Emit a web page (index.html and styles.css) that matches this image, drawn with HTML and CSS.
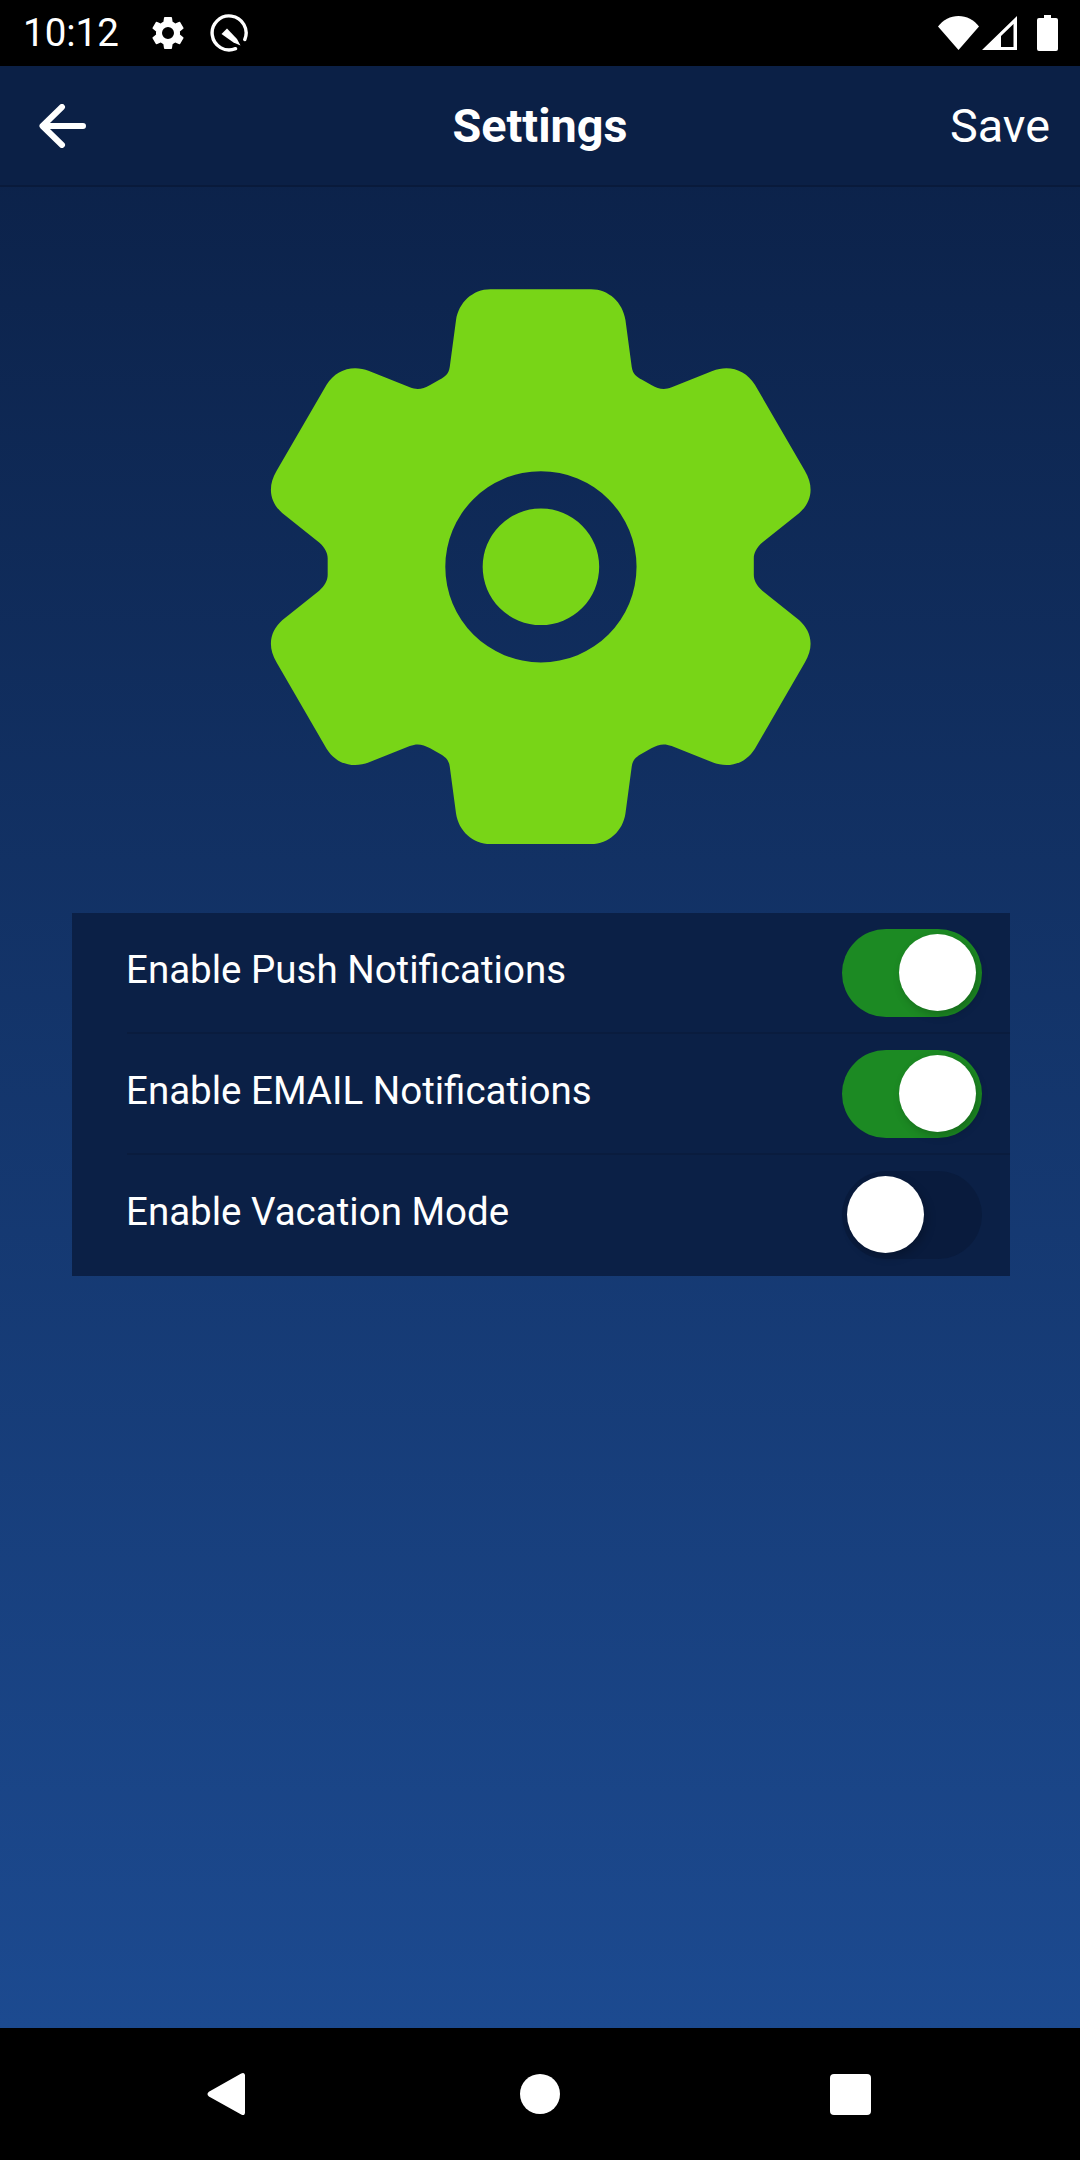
FILE: index.html
```html
<!DOCTYPE html>
<html lang="en">
<head>
<meta charset="utf-8">
<title>Settings</title>
<link rel="stylesheet" href="styles.css">
</head>
<body>
<div class="phone">
  <header class="status">
    <span class="clock">10:12</span>
    <svg class="st-gear" viewBox="0 0 24 24"><path fill="#fff" d="M19.14 12.94c.04-.3.06-.61.06-.94s-.02-.64-.07-.94l2.03-1.58a.5.5 0 0 0 .12-.64l-1.92-3.32a.5.5 0 0 0-.59-.22l-2.39.96a7 7 0 0 0-1.62-.94l-.36-2.54a.48.48 0 0 0-.48-.41h-3.84a.48.48 0 0 0-.47.41l-.36 2.54c-.59.24-1.13.57-1.62.94l-2.39-.96a.49.49 0 0 0-.59.22L2.74 8.87a.48.48 0 0 0 .12.61l2.03 1.58c-.05.3-.09.63-.09.94s.02.64.07.94l-2.03 1.58a.5.5 0 0 0-.12.64l1.92 3.32c.12.22.37.29.59.22l2.39-.96c.5.38 1.03.7 1.62.94l.36 2.54c.05.24.24.41.48.41h3.84c.24 0 .44-.17.47-.41l.36-2.54c.59-.24 1.13-.56 1.62-.94l2.39.96c.22.08.47 0 .59-.22l1.92-3.32a.48.48 0 0 0-.12-.61zM12 15.6A3.6 3.6 0 1 1 12 8.4a3.6 3.6 0 0 1 0 7.2z"/></svg>
    <svg class="st-q" viewBox="0 0 38 38"><path fill="none" stroke="#fff" stroke-width="3.4" stroke-linecap="round" d="M25.500 34.700A17 17 0 1 1 34.800 25.500"/><path fill="#fff" d="M17 14.500 27 25 30.500 31.500 23.500 28.500 11.500 20z"/></svg>
    <span class="status-gap"></span>
    <svg class="st-wifi" viewBox="0 0 41 34"><path fill="#fff" d="M0 10.500C5 4 12.500 0 20.500 0S36 4 41 10.500L20.500 34z"/></svg>
    <svg class="st-signal" viewBox="0 0 35 34"><path fill="#fff" fill-rule="evenodd" d="M0 34 35 0V34zM19 20V31H31.500V8z"/></svg>
    <svg class="st-batt" viewBox="0 0 21 36"><path fill="#fff" d="M7 0h7v3h5a2 2 0 0 1 2 2v29a2 2 0 0 1-2 2H2a2 2 0 0 1-2-2V5a2 2 0 0 1 2-2h5z"/></svg>
  </header>

  <main class="screen">
    <nav class="appbar">
      <svg class="back" viewBox="0 0 48 44"><path fill="none" stroke="#fff" stroke-width="6" stroke-linecap="round" stroke-linejoin="round" d="M44 22H4M23 3 3.500 22 23 41"/></svg>
      <h1 class="title">Settings</h1>
      <span class="save">Save</span>
    </nav>

    <div class="hero">
      <svg class="hero-gear" viewBox="0 0 1568 1568"><path fill="#78d517" fill-rule="evenodd" d="M786 52H922C970 52 1008 88 1015 135L1032 262C1035 282 1045 288 1060 297L1085 311C1105 322 1120 325 1140 317L1250 273C1295 255 1340 270 1365 310L1500 543C1528 590 1515 630 1485 657L1385 737C1370 750 1362 765 1362 780V824C1362 839 1370 854 1385 867L1485 947C1515 974 1528 1014 1500 1061L1365 1294C1340 1334 1295 1349 1250 1331L1140 1287C1120 1279 1105 1282 1085 1293L1060 1307C1045 1316 1035 1322 1032 1342L1015 1469C1008 1516 970 1552 922 1552H650C602 1552 564 1516 557 1469L540 1342C537 1322 527 1316 512 1307L487 1293C467 1282 452 1279 432 1287L322 1331C277 1349 232 1334 207 1294L72 1061C44 1014 57 974 87 947L187 867C202 854 210 839 210 824V780C210 765 202 750 187 737L87 657C57 630 44 590 72 543L207 310C232 270 277 255 322 273L432 317C452 325 467 322 487 311L512 297C527 288 537 282 540 262L557 135C564 88 602 52 650 52ZM786.500 544A258.500 258.500 0 1 0 786.500 1061A258.500 258.500 0 1 0 786.500 544ZM786.500 645A157.500 157.500 0 1 1 786.500 960A157.500 157.500 0 1 1 786.500 645Z"/></svg>
    </div>

    <section class="panel">
      <div class="row">
        <span class="label">Enable Push Notifications</span>
        <span class="switch on"><span class="thumb"></span></span>
      </div>
      <div class="row">
        <span class="label">Enable EMAIL Notifications</span>
        <span class="switch on"><span class="thumb"></span></span>
      </div>
      <div class="row">
        <span class="label">Enable Vacation Mode</span>
        <span class="switch"><span class="thumb"></span></span>
      </div>
    </section>
  </main>

  <footer class="navbar">
    <svg class="nav-back" viewBox="0 0 40 46"><path fill="#fff" d="M36 1.500C38 0 40 1 40 3.500V42.500C40 45 38 46 36 44.500L2 25.500C0 24 0 22 2 20.500z"/></svg>
    <span class="nav-home"></span>
    <span class="nav-recent"></span>
  </footer>
</div>
</body>
</html>
```
FILE: styles.css
```css
* { box-sizing: border-box; }
html, body { margin: 0; padding: 0; }
body { font-family: Roboto, "Liberation Sans", sans-serif; color: #fff; background: #000; }
.phone { width: 1080px; height: 2160px; display: flex; flex-direction: column; overflow: hidden; }

.status { height: 66px; flex: none; background: #000; display: flex; align-items: center; padding: 0 22px 0 23px; }
.clock { font-size: 38.5px; line-height: 66px; width: 128px; }
.st-gear { width: 40px; height: 40px; display: block; margin-left: -3px; }
.st-q { width: 38px; height: 38px; display: block; margin-left: 22px; }
.status-gap { flex: 1; }
.st-wifi { width: 41px; height: 34px; display: block; margin-top: -1px; }
.st-signal { width: 35px; height: 34px; display: block; margin-left: 3px; }
.st-batt { width: 21px; height: 36px; display: block; margin-left: 20px; }

.screen { flex: 1; display: flex; flex-direction: column; background: linear-gradient(180deg, #0b2046 0%, #1c4a90 100%); }
.appbar { height: 121px; flex: none; display: grid; grid-template-columns: 1fr auto 1fr; align-items: center; padding: 2px 30px 0; background: #0b2046; border-bottom: 2px solid #091a3b; }
.back { width: 48px; height: 44px; display: block; margin: -2px 0 0 9px; }
.title { margin: 0; font-size: 46.75px; font-weight: 700; line-height: 1; }
.save { font-size: 46.75px; line-height: 1; justify-self: end; }

.hero { height: 726px; flex: none; display: flex; justify-content: center; padding-top: 83px; }
.hero-gear { width: 580px; height: 580px; display: block; }

.panel { margin: 0 70px 0 72px; background: #0b2046; display: flex; flex-direction: column; }
.row { height: 121px; margin-left: 55px; padding: 1px 28px 0 0; display: flex; align-items: center; justify-content: space-between; border-bottom: 2px solid #0a1c3e; }
.row:last-child { border-bottom-color: transparent; }
.label { font-size: 38.5px; line-height: 1; padding-bottom: 5px; margin-left: -1px; }

.switch { width: 140px; height: 88px; border-radius: 44px; background: #091b3d; position: relative; flex: none; display: block; }
.switch.on { background: #1c8a23; }
.thumb { position: absolute; top: 5px; left: 5px; width: 77px; height: 77px; border-radius: 50%; background: #fff; box-shadow: 3px 4px 10px rgba(0,0,0,.22); }
.switch.on .thumb { left: 57px; }

.navbar { height: 132px; flex: none; background: #000; display: flex; align-items: center; justify-content: space-between; padding: 0 209px 0 207px; }
.nav-back { width: 38px; height: 46px; display: block; }
.nav-home { width: 40px; height: 40px; border-radius: 50%; background: #fff; display: block; margin-left: 5px; }
.nav-recent { width: 41px; height: 41px; border-radius: 4px; background: #fff; display: block; }
```
